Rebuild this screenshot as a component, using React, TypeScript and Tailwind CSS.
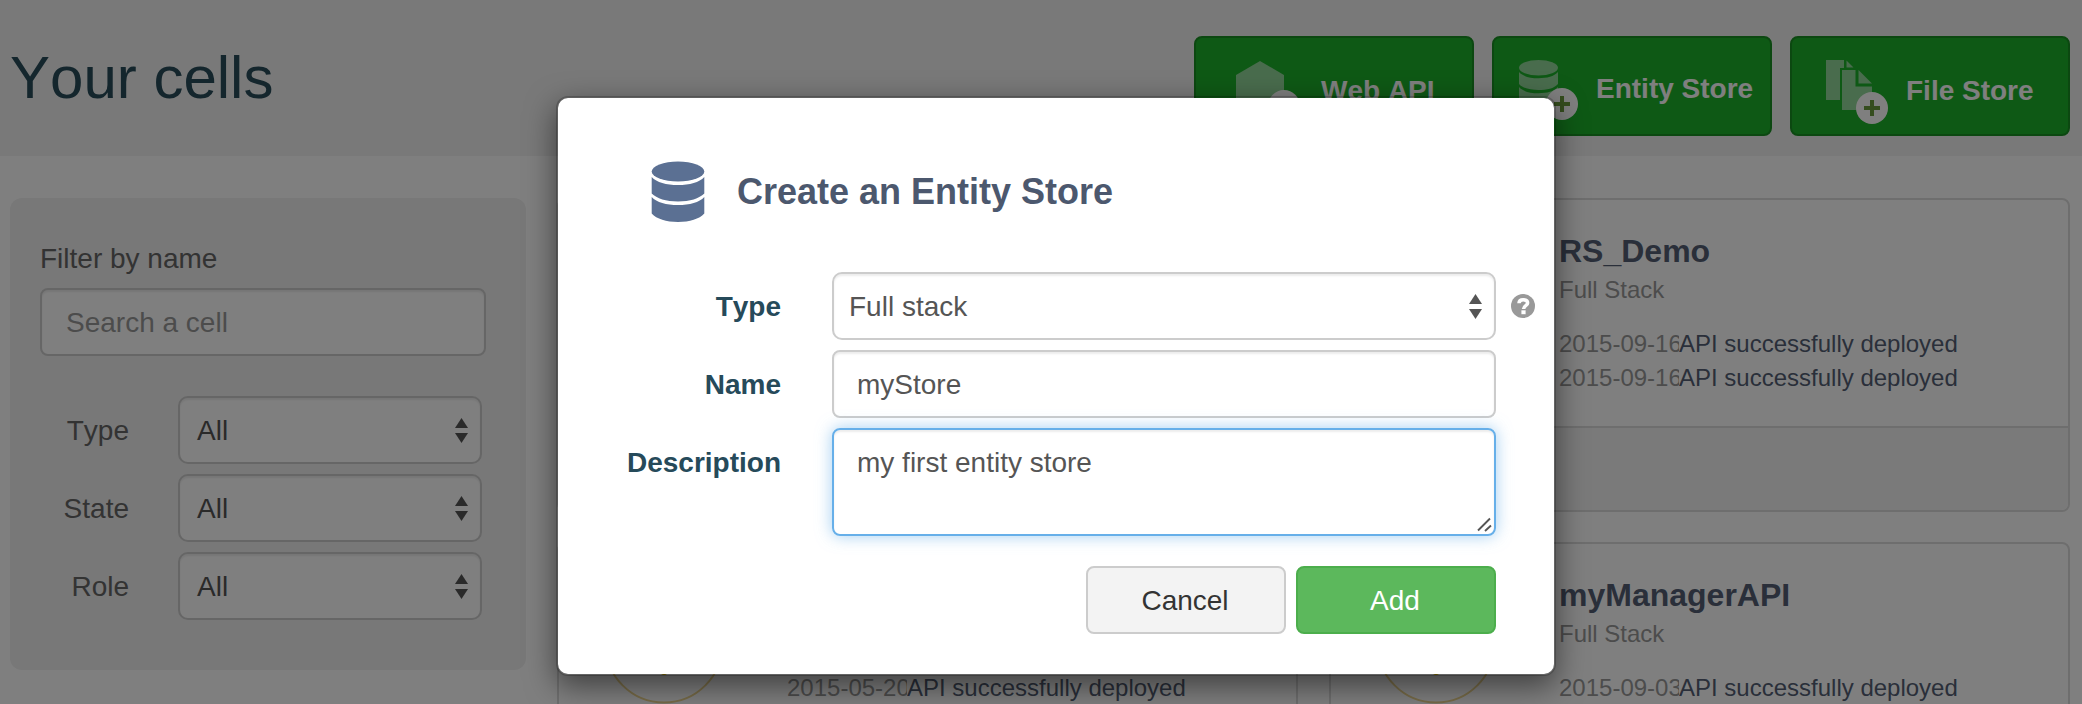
import React from "react";

type Log = { date: string; message: string };
type Cell = { name?: string; kind?: string; logs: Log[] };

const deployed = "API successfully deployed";

const cells: Cell[] = [
  { logs: [] },
  {
    name: "RS_Demo",
    kind: "Full Stack",
    logs: [
      { date: "2015-09-16", message: deployed },
      { date: "2015-09-16", message: deployed },
    ],
  },
  { logs: [{ date: "2015-05-20", message: deployed }] },
  { name: "myManagerAPI", kind: "Full Stack", logs: [{ date: "2015-09-03", message: deployed }] },
];

function PlusBadge({ cx, cy }: { cx: number; cy: number }) {
  return (
    <g>
      <circle cx={cx} cy={cy} r="16" fill="#fff" />
      <path d={`M${cx - 8} ${cy}h16M${cx} ${cy - 8}v16`} stroke="#6b9a3c" strokeWidth="4" />
    </g>
  );
}

function WebApiIcon() {
  return (
    <svg width="66" height="64" viewBox="0 0 66 64" className="mt-[23px] shrink-0">
      <path d="M24 0l24 14v28L24 56L0 42V14z" fill="#92d89a" />
      <PlusBadge cx={48} cy={45} />
    </svg>
  );
}

function EntityIcon() {
  return (
    <svg width="60" height="60" viewBox="0 0 60 60" className="mt-[22px] shrink-0">
      <g fill="#92d89a">
        <ellipse cx="20.500" cy="7.800" rx="19.500" ry="7.800" />
        <path d="M1 12c4 4.500 11 6.200 19.500 6.200S36 16.500 40 12v12c-4 4.500-11 6-19.500 6S5 28.500 1 24z" />
        <path d="M1 27c4 4.500 11 6.200 19.500 6.200S36 31.500 40 27v12c-4 4.500-11 6-19.500 6S5 43.500 1 39z" />
      </g>
      <PlusBadge cx={44} cy={44} />
    </svg>
  );
}

function FileIcon() {
  return (
    <svg width="62" height="64" viewBox="0 0 62 64" className="mt-[22px] shrink-0">
      <g fill="#92d89a">
        <path d="M0 0h18v8h-4v32H0z" />
        <path d="M20.500 0.500l7 7h-7z" />
        <path d="M16 10h13.500v16.500H46V50H16z" />
        <path d="M32.500 10L46 23.500H32.500z" />
      </g>
      <PlusBadge cx={46} cy={48} />
    </svg>
  );
}

function CreateButton({ className, children }: { className: string; children: React.ReactNode }) {
  return (
    <button
      className={`flex h-[100px] w-[280px] items-start rounded-[8px] border-2 border-[#189022] bg-[#1cb22a] text-[28px] leading-[40px] font-bold whitespace-nowrap text-white ${className}`}
    >
      {children}
    </button>
  );
}

function Arrows({ color }: { color: string }) {
  return (
    <svg width="13" height="25" viewBox="0 0 13 25" className="-mt-[2px] shrink-0" fill={color}>
      <path d="M6.500 0L13 10H0z" />
      <path d="M0 15h13L6.500 25z" />
    </svg>
  );
}

function Filter({ label }: { label: string }) {
  return (
    <div className="flex h-[68px] items-center">
      <span className="w-[89px] pt-[2px] text-right text-[28px] text-[#666]">{label}</span>
      <div className="ml-[49px] flex h-[68px] w-[304px] items-center justify-between rounded-[10px] border-2 border-[#ccc] bg-white pt-[2px] pr-[12px] pl-[17px] text-[28px] text-[#555] shadow-[inset_0_2px_2px_rgba(0,0,0,0.075)]">
        <span>All</span>
        <Arrows color="#555" />
      </div>
    </div>
  );
}

function CellCard({ cell }: { cell: Cell }) {
  return (
    <article className="flex h-[314px] flex-col overflow-hidden rounded-[8px] border-2 border-[#dcdcdc] bg-white">
      <div className="flex h-[226px] shrink-0">
        <svg width="120" height="120" viewBox="0 0 120 120" className="mt-[40px] ml-[45px] shrink-0">
          <circle cx="60" cy="60" r="58.500" fill="none" stroke="#eed690" strokeWidth="2" />
          <circle cx="60" cy="87.500" r="3.500" fill="#d9b400" />
        </svg>
        <div className="ml-[63px] pt-[31px] whitespace-nowrap">
          <h2 className="h-[40px] text-[32px] leading-[40px] font-bold text-[#545f75]">{cell.name}</h2>
          <p className="h-[37px] text-[24px] leading-[37px] text-[#999]">{cell.kind}</p>
          <ul className="mt-[19px] text-[24px] leading-[34px]">
            {cell.logs.map((log, i) => (
              <li key={i} className="flex">
                <span className="w-[120px] overflow-hidden text-[#999]">{log.date}</span>
                <span className="text-[#545f75]">{log.message}</span>
              </li>
            ))}
          </ul>
        </div>
      </div>
      <div className="grow border-t-2 border-[#dcdcdc] bg-[#f5f5f5]" />
    </article>
  );
}

function FieldLabel({ children }: { children: React.ReactNode }) {
  return (
    <label className="w-[223px] shrink-0 pt-[2px] text-right text-[28px] leading-[66px] font-bold text-[#264a5a]">
      {children}
    </label>
  );
}

function CreateDialog() {
  return (
    <div
      role="dialog"
      className="absolute top-[96px] left-[556px] h-[580px] w-[1000px] rounded-[12px] border-2 border-black/20 bg-white bg-clip-padding shadow-[0_10px_30px_rgba(0,0,0,0.5)]"
    >
      <header className="flex h-[174px] items-start pt-[63px] pl-[93px]">
        <svg width="54" height="62" viewBox="0 0 54 62" fill="#5b7093" className="shrink-0">
          <ellipse cx="27" cy="10.500" rx="26.300" ry="10" />
          <path d="M.7 16c5 5.500 14.500 8 26.300 8s21.300-2.500 26.300-8v16.500c-5 5-14.500 8-26.300 8s-21.300-3-26.300-8z" />
          <path d="M.7 36c5 5.500 14.500 8 26.300 8s21.300-2.500 26.300-8v16.500c-5 5.500-14.500 8.500-26.300 8.500s-21.300-3-26.300-8.500z" />
        </svg>
        <h3 className="ml-[32px] pt-[1px] text-[36px] leading-[60px] font-bold whitespace-nowrap text-[#4c586e]">
          Create an Entity Store
        </h3>
      </header>
      <div className="flex flex-col gap-[10px]">
        <div className="flex h-[68px] items-center">
          <FieldLabel>Type</FieldLabel>
          <div className="ml-[51px] flex h-[68px] w-[664px] items-center justify-between rounded-[10px] border-2 border-[#ccc] pt-[2px] pr-[12px] pl-[15px] text-[28px] text-[#555] shadow-[inset_0_2px_2px_rgba(0,0,0,0.075)]">
            <span>Full stack</span>
            <Arrows color="#555" />
          </div>
          <svg width="24" height="24" viewBox="0 0 24 24" className="ml-[15px] shrink-0">
            <circle cx="12" cy="12" r="12" fill="#999" />
            <path d="M8 9.300C8.100 6.900 9.700 5.700 12.200 5.700s4.400 1.200 4.400 3.300c0 2.800-4 2.500-4 6" fill="none" stroke="#fff" strokeWidth="3.600" />
            <path d="M10.400 16.300h4.200v3.900h-4.200z" fill="#fff" />
          </svg>
        </div>
        <div className="flex h-[68px] items-center">
          <FieldLabel>Name</FieldLabel>
          <div className="ml-[51px] flex h-[68px] w-[664px] items-center rounded-[8px] border-2 border-[#ccc] pt-[2px] pl-[23px] text-[28px] text-[#555] shadow-[inset_0_2px_2px_rgba(0,0,0,0.075)]">
            myStore
          </div>
        </div>
        <div className="flex h-[108px] items-start">
          <FieldLabel>Description</FieldLabel>
          <div className="ml-[51px] flex h-[108px] w-[664px] justify-between rounded-[8px] border-2 border-[#66afe9] pr-[2px] pb-[2px] pl-[23px] text-[28px] leading-[66px] text-[#555] shadow-[inset_0_2px_2px_rgba(0,0,0,0.075),0_0_16px_rgba(102,175,233,0.6)]">
            <span>my first entity store</span>
            <svg width="15" height="15" viewBox="0 0 15 15" className="self-end" stroke="#555" strokeWidth="1.900">
              <path d="M1 13.500L13 1.500M8 14L14 8.500" />
            </svg>
          </div>
        </div>
      </div>
      <footer className="mt-[30px] flex justify-end gap-[10px] pr-[58px]">
        <button className="h-[68px] w-[200px] rounded-[8px] border-2 border-[#ccc] bg-[#f3f3f3] pt-[2px] pr-[2px] text-[28px] text-[#333]">
          Cancel
        </button>
        <button className="h-[68px] w-[200px] rounded-[8px] border-2 border-[#4cae4c] bg-[#5cb85c] pt-[2px] pr-[2px] text-[28px] text-white">
          Add
        </button>
      </footer>
    </div>
  );
}

export default function App() {
  return (
    <div className="relative h-[704px] w-[2082px] overflow-hidden bg-white font-['Liberation_Sans',Arial,sans-serif] [font-kerning:none]">
      <header className="flex h-[156px] items-start justify-between bg-[#f2f2f2] pr-[12px] pl-[10px]">
        <h1 className="mt-[38px] text-[60px] leading-[80px] text-[#284c5a]">Your cells</h1>
        <div className="mt-[36px] flex gap-[18px]">
          <CreateButton className="pl-[40px]">
            <WebApiIcon />
            <span className="mt-[33px] ml-[19px]">Web API</span>
          </CreateButton>
          <CreateButton className="pl-[24px]">
            <EntityIcon />
            <span className="mt-[31px] ml-[18px]">Entity Store</span>
          </CreateButton>
          <CreateButton className="pl-[34px]">
            <FileIcon />
            <span className="mt-[33px] ml-[18px]">File Store</span>
          </CreateButton>
        </div>
      </header>
      <main className="flex items-start gap-[31px] pt-[42px] pl-[10px]">
        <aside className="h-[472px] w-[516px] shrink-0 rounded-[12px] bg-[#f0f0f0] pt-[39px] pl-[30px]">
          <p className="text-[28px] leading-[44px] text-[#666]">Filter by name</p>
          <div className="mt-[7px] flex h-[68px] w-[446px] items-center rounded-[8px] border-2 border-[#ccc] bg-white pt-[2px] pl-[24px] text-[28px] text-[#999] shadow-[inset_0_2px_2px_rgba(0,0,0,0.075)]">
            Search a cell
          </div>
          <div className="mt-[40px] flex flex-col gap-[10px]">
            <Filter label="Type" />
            <Filter label="State" />
            <Filter label="Role" />
          </div>
        </aside>
        <section className="grid grid-cols-[741px_741px] gap-x-[31px] gap-y-[30px]">
          {cells.map((cell, i) => (
            <CellCard key={i} cell={cell} />
          ))}
        </section>
      </main>
      <div className="absolute inset-0 bg-black/50" />
      <CreateDialog />
    </div>
  );
}
